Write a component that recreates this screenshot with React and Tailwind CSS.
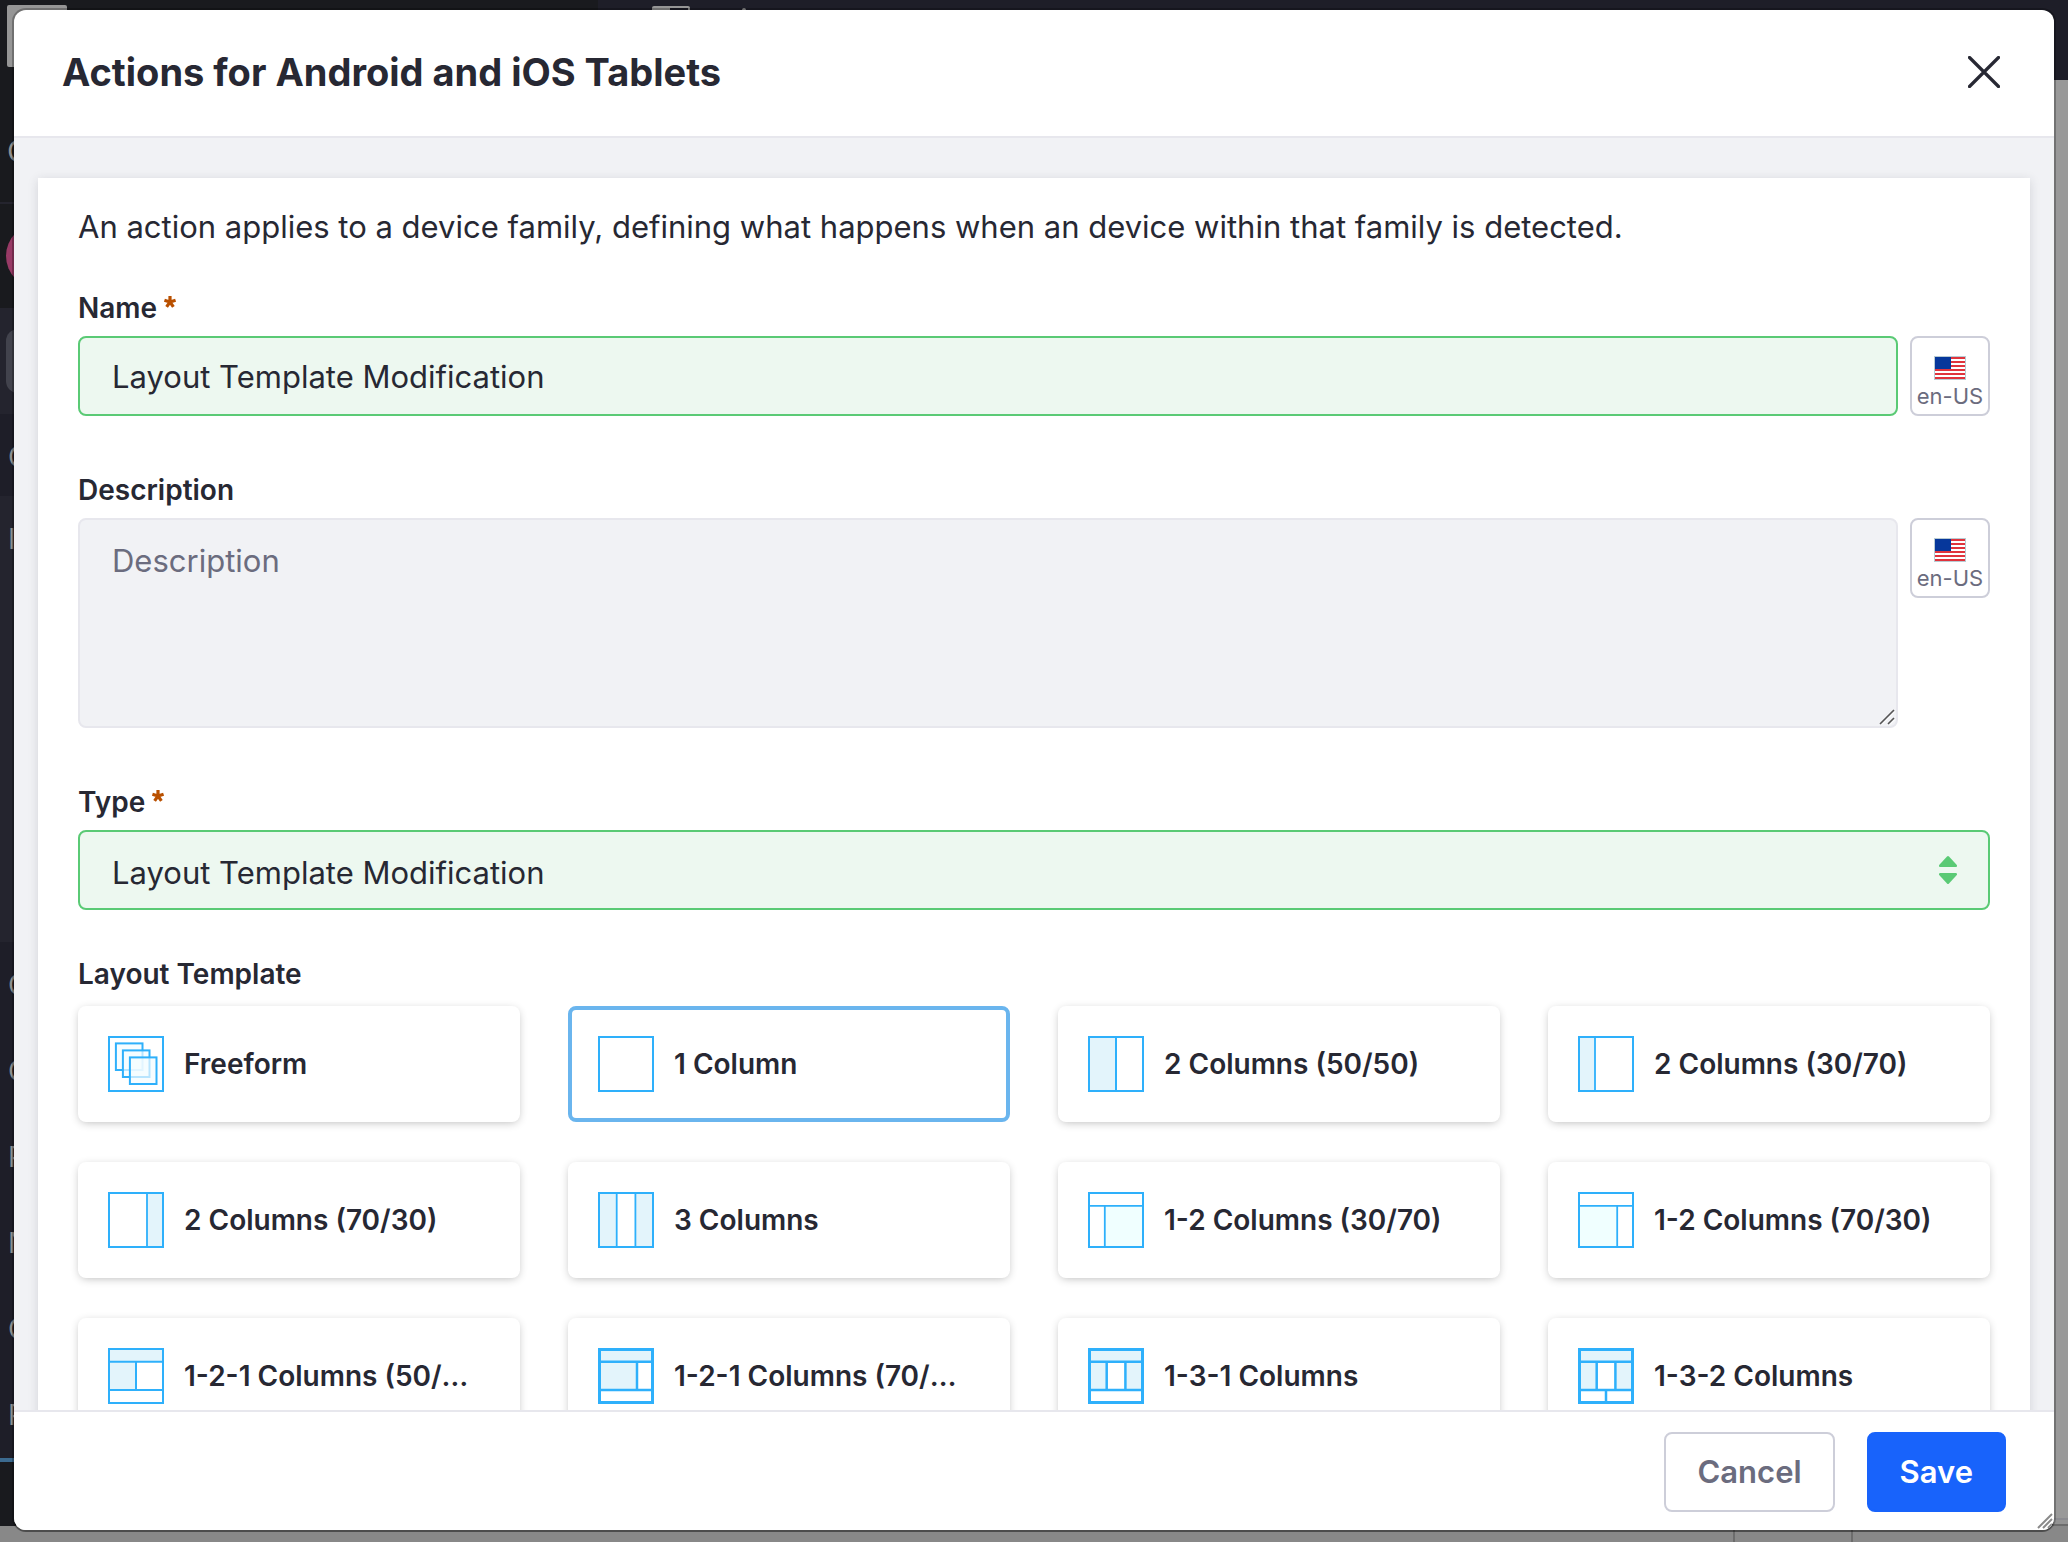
import { useState } from "react";

const STROKE = "#2eb0fb";
const TINT = "#e3f4fb";
const PALE = "#f0ffff";

const layouts = [
  {
    name: "Freeform",
    squares: [7, 14, 21],
  },
  { name: "1 Column" },
  { name: "2 Columns (50/50)", fills: [[0, 0, 28, 56]], lines: [[28, 0, 28, 56]], inner: 2 },
  { name: "2 Columns (30/70)", fills: [[0, 0, 17, 56]], lines: [[17, 0, 17, 56]] },
  { name: "2 Columns (70/30)", fills: [[39, 0, 17, 56]], lines: [[39, 0, 39, 56]] },
  {
    name: "3 Columns",
    fills: [[0, 0, 19, 56], [38, 0, 18, 56]],
    lines: [[18.7, 0, 18.7, 56], [37.4, 0, 37.4, 56]],
  },
  {
    name: "1-2 Columns (30/70)",
    tint: PALE,
    fills: [[17, 14, 39, 42]],
    lines: [[0, 13.8, 56, 13.8], [16.8, 14, 16.8, 56]],
  },
  {
    name: "1-2 Columns (70/30)",
    tint: PALE,
    fills: [[0, 14, 39, 42]],
    lines: [[0, 13.8, 56, 13.8], [39.2, 14, 39.2, 56]],
  },
  {
    name: "1-2-1 Columns (50/50)",
    fills: [[0, 0, 56, 14], [0, 14, 28, 28]],
    lines: [[0, 13.8, 56, 13.8], [0, 42, 56, 42], [28, 14, 28, 42]],
    inner: 2,
  },
  {
    name: "1-2-1 Columns (70/30)",
    fills: [[0, 0, 56, 14], [0, 14, 39, 28]],
    lines: [[0, 13.8, 56, 13.8], [0, 42, 56, 42], [39, 14, 39, 42]],
    frame: 3,
    inner: 2.5,
  },
  {
    name: "1-3-1 Columns",
    fills: [[0, 0, 56, 14], [0, 14, 19, 28], [38, 14, 18, 28]],
    lines: [[0, 13.8, 56, 13.8], [0, 42, 56, 42], [18.7, 14, 18.7, 42], [37.4, 14, 37.4, 42]],
    frame: 3,
    inner: 2.5,
  },
  {
    name: "1-3-2 Columns",
    fills: [[0, 0, 56, 14], [0, 14, 19, 28], [38, 14, 18, 28]],
    lines: [
      [0, 13.8, 56, 13.8],
      [0, 42, 56, 42],
      [18.7, 14, 18.7, 42],
      [37.4, 14, 37.4, 42],
      [28, 42, 28, 56],
    ],
    frame: 3,
    inner: 2.5,
  },
];

function LayoutIcon({ squares = [], fills = [], lines = [], tint = TINT, frame = 2, inner = 1.8 }) {
  return (
    <svg viewBox="0 0 56 56" className="size-14 shrink-0" aria-hidden="true">
      <rect width="56" height="56" fill="#fff" />
      {fills.map(([x, y, w, h], i) => (
        <rect key={i} x={x} y={y} width={w} height={h} fill={tint} />
      ))}
      {lines.map(([x1, y1, x2, y2], i) => (
        <line key={i} x1={x1} y1={y1} x2={x2} y2={y2} stroke={STROKE} strokeWidth={inner} />
      ))}
      {squares.map((p) => (
        <rect
          key={p}
          x={p + 0.9}
          y={p + 0.4}
          width="26.6"
          height="26.6"
          fill="#f4fcff"
          fillOpacity="0.7"
          stroke={STROKE}
          strokeWidth="2"
        />
      ))}
      <rect
        x={frame / 2}
        y={frame / 2}
        width={56 - frame}
        height={56 - frame}
        fill="none"
        stroke={STROKE}
        strokeWidth={frame}
      />
    </svg>
  );
}

function Flag() {
  return (
    <svg viewBox="0 0 32 24" className="h-6 w-8" aria-hidden="true">
      <rect width="32" height="24" fill="#b9cbd3" />
      <rect x="1" y="1" width="30" height="22" fill="#fff" />
      {[1, 5, 9, 13, 17, 21].map((y) => (
        <rect key={y} x="1" y={y} width="30" height="2" fill="#e0333c" />
      ))}
      <rect x="1" y="1" width="16" height="12" fill="#06379b" />
    </svg>
  );
}

function LocaleButton() {
  return (
    <button
      type="button"
      className="flex h-20 w-20 shrink-0 flex-col items-center rounded-lg border-2 border-[#cdced9] bg-white pt-[18px] text-[22px] leading-8 text-[#6b6c7e]"
    >
      <Flag />
      <span className="whitespace-nowrap">en-US</span>
    </button>
  );
}

function FieldLabel({ htmlFor, required, children }) {
  return (
    <label htmlFor={htmlFor} className="mb-2 flex w-fit gap-[7px] text-[28px] leading-10 font-semibold">
      {children}
      {required && (
        <svg viewBox="0 0 12 12" className="mt-2 size-3" aria-label="required">
          <path
            d="M6 6V0M6 6L.4 4.2M6 6l5.600-1.800M6 6L2.600 10.800M6 6l3.400 4.800"
            fill="none"
            stroke="#b95000"
            strokeWidth="3.2"
          />
        </svg>
      )}
    </label>
  );
}

const NavLetter = ({ children }) => (
  <span className="block h-[86px] pl-2 text-[28px] leading-[86px] text-[#8f8f8f]">{children}</span>
);

function Backdrop() {
  return (
    <div aria-hidden="true" className="absolute inset-0 flex bg-[#888]">
      <div className="mb-4 flex w-[598px] flex-col overflow-hidden bg-[#191a1e]">
        <div className="h-[202px] shrink-0 pt-[5px] pl-[7px]">
          <div className="h-[62px] w-[60px] rounded-xs bg-[#969696]" />
          <span className="block pt-16 text-[30px] leading-10 text-[#8f8f8f]">C</span>
        </div>
        <div className="h-[106px] shrink-0 border-t-2 border-[#24242e] pt-[20px] pl-[6px]">
          <div className="size-16 rounded-full bg-[#983a66]" />
        </div>
        <div className="h-[106px] shrink-0 bg-[#24242e] py-[21px] pl-[6px]">
          <div className="h-16 rounded-xl bg-[#42434d]" />
        </div>
        <div className="h-[82px] shrink-0 bg-[#1e1e28]">
          <NavLetter>C</NavLetter>
        </div>
        <div className="h-[446px] shrink-0 bg-[#24242e]">
          <NavLetter>I</NavLetter>
        </div>
        <div className="h-[516px] shrink-0 bg-[#1e1e28]">
          <NavLetter>C</NavLetter>
          <NavLetter>C</NavLetter>
          <NavLetter>P</NavLetter>
          <NavLetter>N</NavLetter>
          <NavLetter>C</NavLetter>
          <NavLetter>P</NavLetter>
        </div>
        <div className="h-1 shrink-0 bg-[#3b6a8f]" />
      </div>
      <div className="flex flex-1 flex-col">
        <div className="flex h-20 gap-[52px] bg-[#1e1e28] pt-[6px] pl-[54px]">
          <div className="h-8 w-[38px] rounded-xs border-2 border-l-[18px] border-[#969696]" />
          <div className="mt-[2px] size-1 rounded-full bg-[#969696]" />
        </div>
        <div className="flex-1 border-b-2 border-[#8b8b90] bg-[#999]" />
        <div className="h-[6px] border-b-2 border-[#6c6c6c] bg-[#939393]" />
        <div className="flex h-4 justify-end pr-[215px]">
          <div className="w-[120px] border-x-2 border-[#6c6c6c]" />
        </div>
      </div>
    </div>
  );
}

export default function App() {
  const [selected, setSelected] = useState("1 Column");
  const valid =
    "h-20 w-full min-w-0 rounded-lg border-2 border-[#5aca75] bg-[#edf8f0] px-8 text-[31px] outline-none";

  return (
    <div className="relative h-screen overflow-hidden font-['Inter',sans-serif] text-[#272833]">
      <Backdrop />
      <div className="relative h-full px-[14px] pt-[10px] pb-3">
        <section
          role="dialog"
          aria-labelledby="dialog-title"
          className="relative flex h-full flex-col overflow-hidden rounded-xl bg-white shadow-[0_0_0_2px_rgba(0,0,0,0.25),0_2px_0_0_rgba(0,0,0,0.25)]"
        >
          <header className="flex h-32 shrink-0 items-center justify-between border-b-2 border-[#e7e7ed] pr-[46px] pb-[2px] pl-12">
            <h1 id="dialog-title" className="text-[38px] font-bold">
              Actions for Android and iOS Tablets
            </h1>
            <button type="button" aria-label="Close" className="p-2">
              <svg viewBox="0 0 32 32" className="size-8" aria-hidden="true">
                <path
                  d="M1.500 1.500l29 29M30.500 1.500l-29 29"
                  stroke="#272833"
                  strokeWidth="3.2"
                  strokeLinecap="round"
                />
              </svg>
            </button>
          </header>

          <div className="min-h-0 flex-1 overflow-hidden bg-[#f1f2f5] px-6 pt-10">
            <form
              id="action-form"
              onSubmit={(e) => e.preventDefault()}
              className="bg-white px-10 pt-[25px] pb-10 shadow-[0_2px_10px_0_rgba(39,40,51,0.15)]"
            >
              <p className="mb-[37px] text-[31px] leading-[48px]">
                An action applies to a device family, defining what happens when an device within that
                family is detected.
              </p>

              <FieldLabel htmlFor="name" required>
                Name
              </FieldLabel>
              <div className="mb-[54px] flex gap-3">
                <input
                  id="name"
                  type="text"
                  defaultValue="Layout Template Modification"
                  className={valid}
                />
                <LocaleButton />
              </div>

              <FieldLabel htmlFor="description">Description</FieldLabel>
              <div className="mb-[54px] flex items-start gap-3">
                <div className="relative flex flex-1">
                  <textarea
                    id="description"
                    placeholder="Description"
                    className="h-[210px] w-full resize-none rounded-lg border-2 border-[#e7e7ed] bg-[#f1f2f5] px-8 py-[17px] text-[31px] leading-[48px] outline-none placeholder:text-[#6b6c7e]"
                  />
                  <svg
                    viewBox="0 0 16 16"
                    className="absolute right-[3px] bottom-[3px] size-4"
                    aria-hidden="true"
                  >
                    <path d="M1 15L15 1M9 15l6-6" stroke="#555" strokeWidth="1.6" />
                    <path d="M3 15.500L15.500 3M11 15.500l4.500-4.500" stroke="#fff" strokeWidth="1" />
                  </svg>
                </div>
                <LocaleButton />
              </div>

              <FieldLabel htmlFor="type" required>
                Type
              </FieldLabel>
              <div className="relative mb-11">
                <select id="type" className={`${valid} appearance-none pt-[6px]`}>
                  <option>Layout Template Modification</option>
                </select>
                <svg
                  viewBox="0 0 18 28"
                  className="pointer-events-none absolute top-[26px] right-[33px] h-7 w-[18px]"
                  fill="#5aca75"
                  aria-hidden="true"
                >
                  <path d="M8 .6a1.400 1.400 0 0 1 2 0l7.600 8.200c.8.9.4 2.200-.8 2.200H1.200C0 11-.4 9.700.4 8.800z" />
                  <path d="M8 27.400a1.400 1.400 0 0 0 2 0l7.600-8.200c.8-.9.4-2.200-.8-2.200H1.200C0 17-.4 18.300.4 19.200z" />
                </svg>
              </div>

              <div role="radiogroup" aria-labelledby="layout-title">
                <div id="layout-title" className="mb-3 text-[28px] leading-10 font-semibold">
                  Layout Template
                </div>
                <div className="grid grid-cols-4 gap-x-12 gap-y-10">
                  {layouts.map(({ name, ...icon }) => (
                    <label
                      key={name}
                      className="relative flex h-[116px] items-center gap-5 rounded-lg border-4 border-transparent bg-white pr-10 pl-[26px] text-[28px] font-semibold shadow-[0_2px_10px_-2px_rgba(0,0,0,0.3)] has-checked:border-[#6ab5ee] has-checked:shadow-none"
                    >
                      <input
                        type="radio"
                        name="layout"
                        className="sr-only"
                        checked={selected === name}
                        onChange={() => setSelected(name)}
                      />
                      <LayoutIcon {...icon} />
                      <span className="truncate">{name}</span>
                    </label>
                  ))}
                </div>
              </div>
            </form>
          </div>

          <footer className="flex shrink-0 justify-end gap-8 border-t-2 border-[#e7e7ed] bg-white px-12 pt-5 pb-[18px] text-[31px] font-semibold">
            <button
              type="button"
              className="h-20 rounded-lg border-2 border-[#cdced9] bg-white px-[31px] text-[#6b6c7e]"
            >
              Cancel
            </button>
            <button
              type="submit"
              form="action-form"
              className="h-20 rounded-lg border-2 border-[#1863fb] bg-[#1863fb] px-[31px] text-white"
            >
              Save
            </button>
          </footer>

          <svg
            viewBox="0 0 16 16"
            className="absolute right-px bottom-px size-4"
            aria-hidden="true"
          >
            <path d="M1 15L15 1M6 15l9-9M11 15l4-4" stroke="#8a8a8a" strokeWidth="2" />
          </svg>
        </section>
      </div>
    </div>
  );
}
